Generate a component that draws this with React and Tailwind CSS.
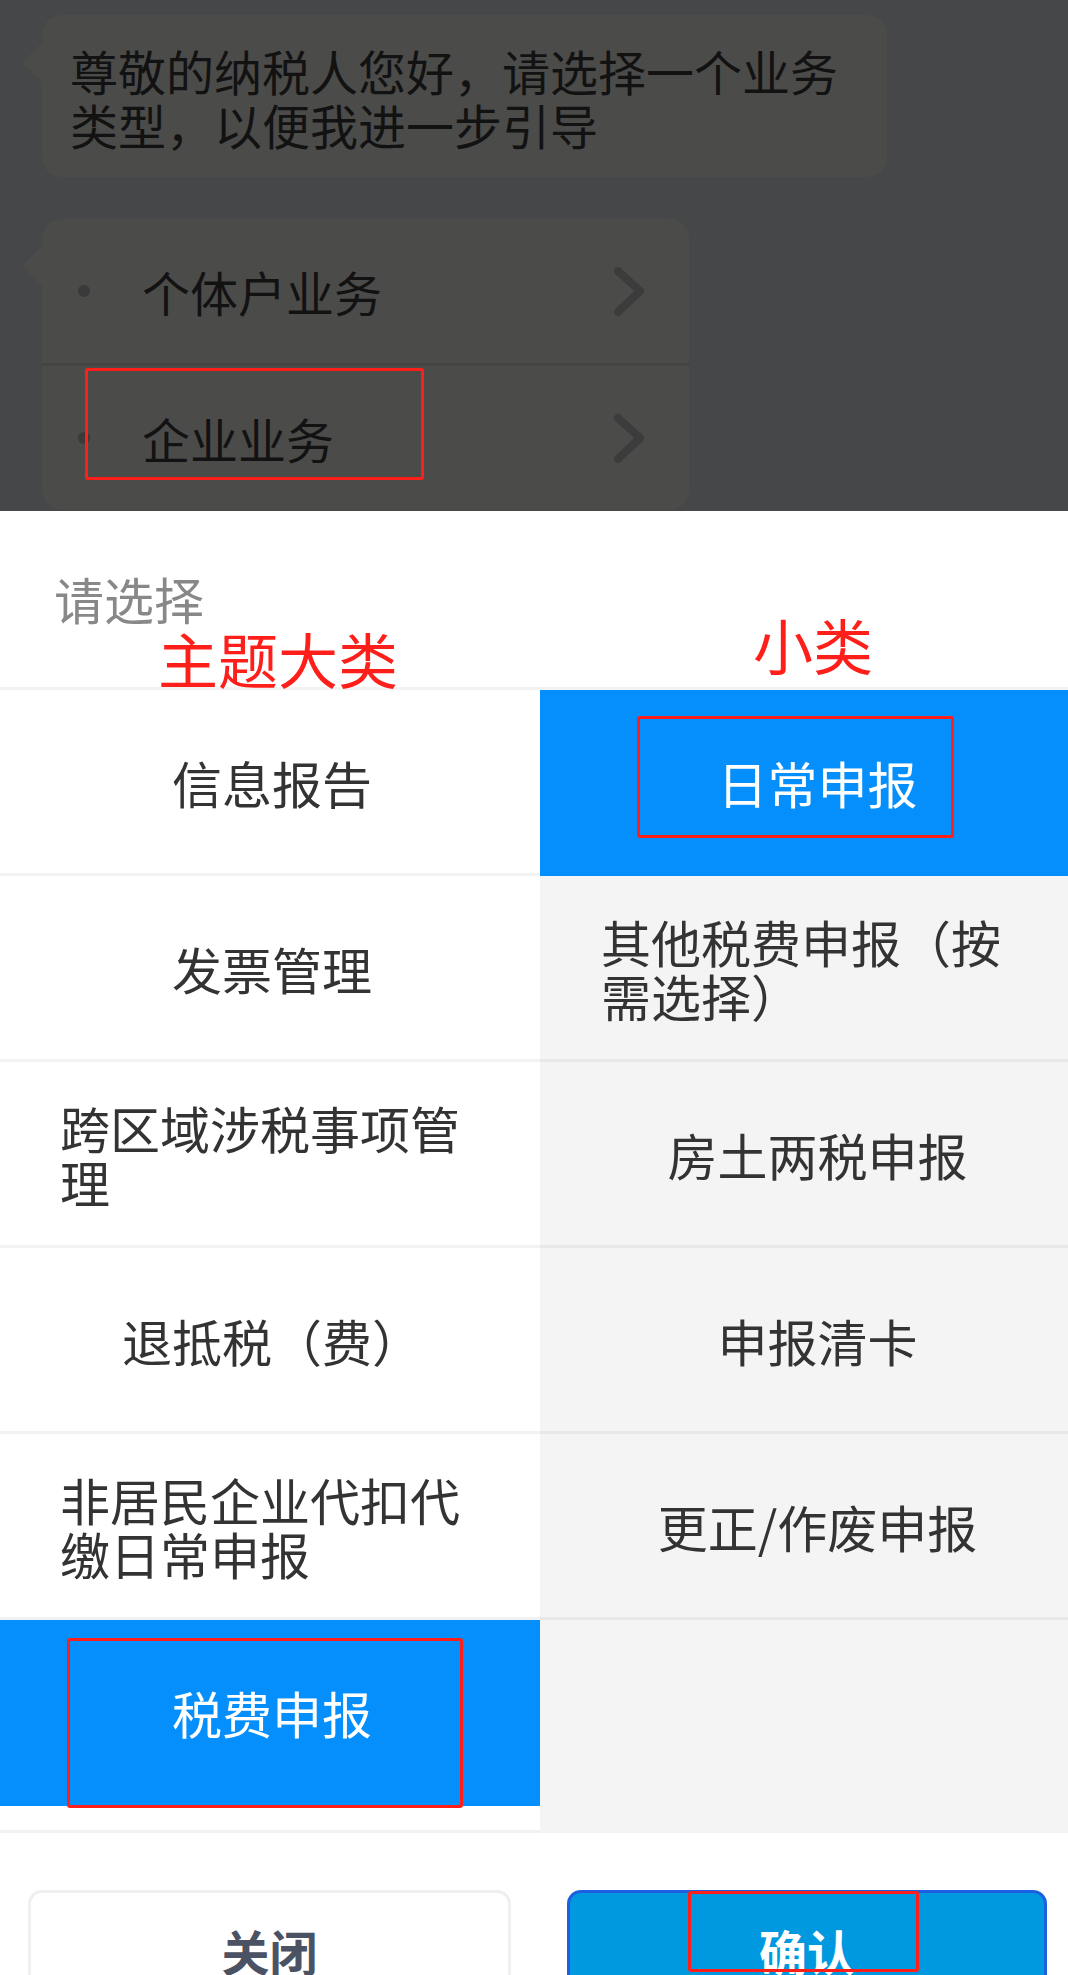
import React from "react";

const leftItems = [
  "信息报告",
  "发票管理",
  "跨区域涉税事项管理",
  "退抵税（费）",
  "非居民企业代扣代缴日常申报",
  "税费申报",
];
const leftSelected = 5;

const rightItems = [
  "日常申报",
  "其他税费申报（按需选择）",
  "房土两税申报",
  "申报清卡",
  "更正/作废申报",
];
const rightSelected = 0;

function Tail({ top }) {
  return (
    <svg
      className="absolute left-[-20px]"
      style={{ top }}
      width="21"
      height="42"
      viewBox="0 0 21 42"
    >
      <path d="M21 0 L0 21 L21 42 Z" fill="#4b4b4a" />
    </svg>
  );
}

function Chevron() {
  return (
    <svg width="36" height="56" viewBox="0 0 36 56" className="ml-auto mr-[42px] shrink-0">
      <path
        d="M7 8 L29 28 L7 49"
        fill="none"
        stroke="#3c3c3c"
        strokeWidth="8"
        strokeLinecap="round"
        strokeLinejoin="round"
      />
    </svg>
  );
}

function OptionRow({ label, last }) {
  return (
    <div
      className={
        "flex items-center pl-[36px] " +
        (last ? "h-[144px]" : "h-[147px] border-b-[3px] border-[#444444]")
      }
    >
      <span className="w-[12px] h-[12px] rounded-full bg-[#3a3a3a] shrink-0" />
      <span className="ml-[52px] text-[48px] leading-[54px] text-[#121212]">{label}</span>
      <Chevron />
    </div>
  );
}

function RedBox({ className }) {
  return (
    <div
      className={
        "absolute border-[3px] border-[#ff1f1a] rounded-[3px] pointer-events-none " + className
      }
    />
  );
}

export default function App() {
  return (
    <div className="relative w-[1068px] h-[1975px] overflow-hidden bg-white font-['Noto_Sans_CJK_SC','Noto_Sans',sans-serif]">
      {/* chat area under mask */}
      <div className="h-[511px] bg-[#464749] pt-[15px] pl-[42px] flex flex-col gap-[42px] overflow-hidden">
        <div className="relative w-[845px] rounded-[20px] bg-[#4b4b4a] pl-[28px] pr-[20px] pt-[28px] pb-[26px]">
          <Tail top={27} />
          <p className="text-[48px] leading-[54px] text-[#121212]">
            尊敬的纳税人您好，请选择一个业务类型，以便我进一步引导
          </p>
        </div>
        <div className="relative w-[647px] rounded-[20px] bg-[#4b4b4a] shrink-0">
          <Tail top={26} />
          <OptionRow label="个体户业务" />
          <OptionRow label="企业业务" last />
        </div>
      </div>

      {/* bottom sheet */}
      <div className="bg-white">
        <div className="h-[179px] pl-[54px] pt-[60px] border-b-[3px] border-[#f2f2f2]">
          <span className="text-[50px] leading-[54px] text-[#888888]">请选择</span>
        </div>

        <div className="grid grid-cols-[540px_528px] h-[1143px]">
          <div className="flex flex-col bg-white border-b-[3px] border-[#f2f2f2]">
            {leftItems.map((t, i) => (
              <div
                key={t}
                className={
                  "h-[186px] shrink-0 flex items-center justify-center pl-[60px] pr-[56px] border-b-[3px] " +
                  (i === leftSelected
                    ? "bg-[#058ffc] border-[#058ffc] text-white"
                    : "border-[#f2f2f2] text-[#333333]")
                }
              >
                <span className="text-[50px] leading-[54px]">{t}</span>
              </div>
            ))}
          </div>
          <div className="flex flex-col bg-[#f4f4f4]">
            {rightItems.map((t, i) => (
              <div
                key={t}
                className={
                  "h-[186px] shrink-0 flex items-center justify-center pl-[61px] pr-[34px] border-b-[3px] " +
                  (i === rightSelected
                    ? "bg-[#058ffc] border-[#058ffc] text-white"
                    : "border-[#e8e8e8] text-[#333333]")
                }
              >
                <span className="text-[50px] leading-[54px]">{t}</span>
              </div>
            ))}
          </div>
        </div>

        <div className="flex pt-[57px] pl-[28px] gap-[56px]">
          <button className="w-[483px] h-[120px] shrink-0 rounded-[14px] border-[3px] border-[#efefef] bg-white flex items-center justify-center text-[48px] leading-[54px] font-bold text-[#4b5263]">
            关闭
          </button>
          <button className="w-[480px] h-[120px] shrink-0 rounded-[14px] border-[3px] border-[#1c5fe0] bg-[#0099df] flex items-center justify-center text-[48px] leading-[54px] font-bold text-white">
            确认
          </button>
        </div>
      </div>

      {/* red annotations */}
      <span className="absolute left-[158px] top-[628px] text-[60px] leading-[60px] text-[#ff1f1a]">
        主题大类
      </span>
      <span className="absolute left-[753px] top-[614px] text-[60px] leading-[60px] text-[#ff1f1a]">
        小类
      </span>
      <RedBox className="left-[85px] top-[368px] w-[339px] h-[112px]" />
      <RedBox className="left-[637px] top-[716px] w-[317px] h-[122px]" />
      <RedBox className="left-[67px] top-[1638px] w-[396px] h-[170px]" />
      <RedBox className="left-[688px] top-[1891px] w-[231px] h-[81px]" />
    </div>
  );
}
